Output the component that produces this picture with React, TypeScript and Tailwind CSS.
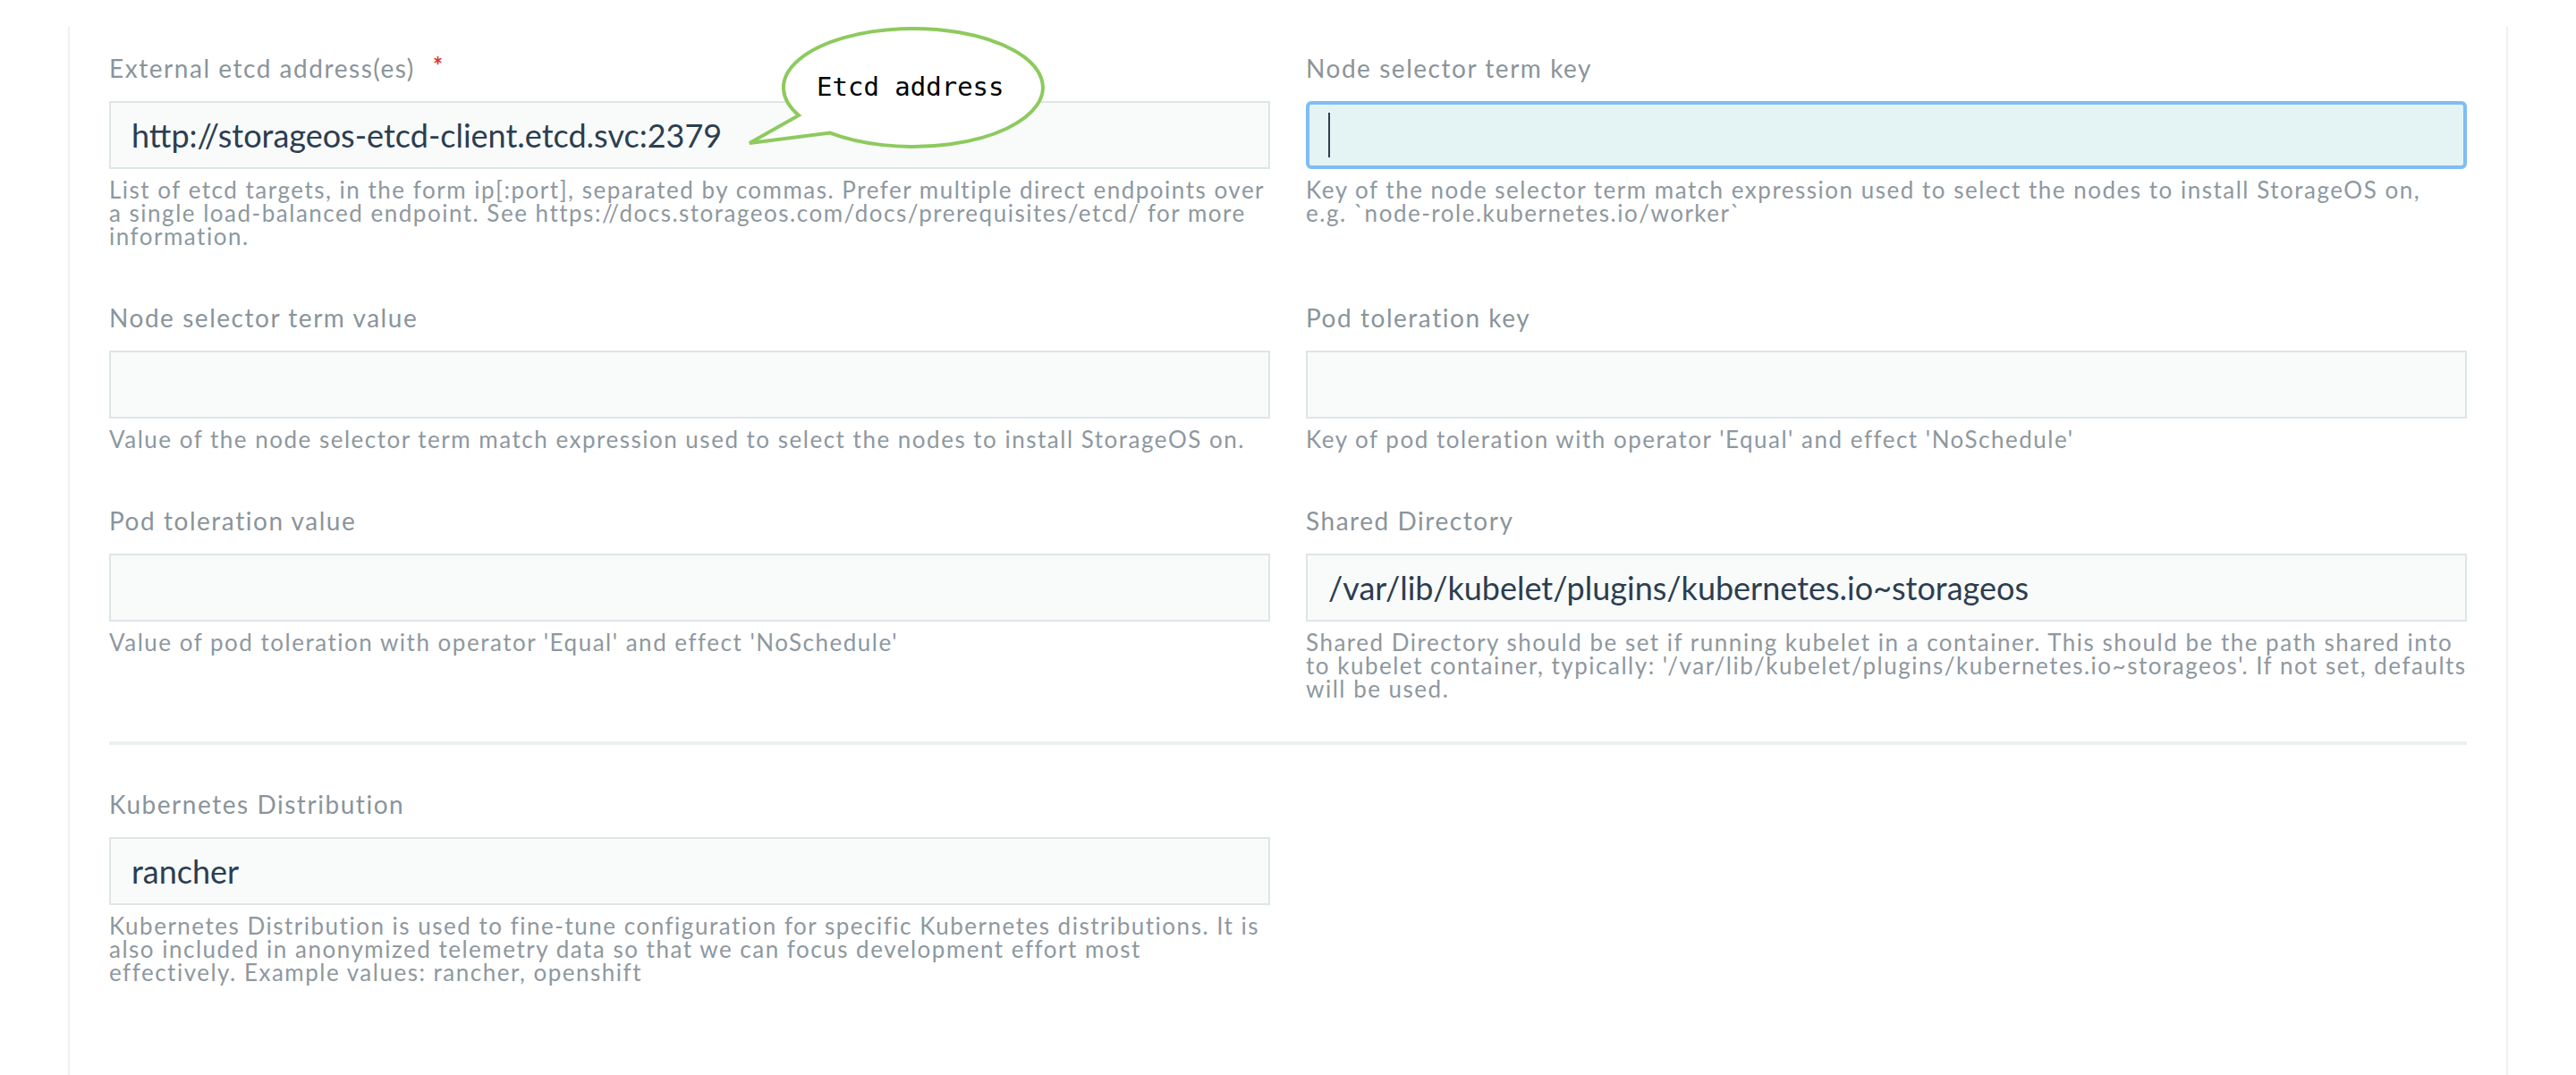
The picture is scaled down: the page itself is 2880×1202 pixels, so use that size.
import React from 'react'

const labelCls = "block text-[28px] leading-[28px] text-[#8a949b] tracking-[0.055em]"
const helpCls = "mt-[10px] text-[26px] leading-[26px] text-[#8e989f] tracking-[0.058em]"
const inputCls =
  "h-[76px] w-full border-2 border-[#dfe5e8] bg-[#f9fbfb] pl-[23px] text-[36px] text-[#2c3e50] outline-none"

function Field({
  label,
  required,
  value,
  focused,
  help,
}: {
  label: string
  required?: boolean
  value?: string
  focused?: boolean
  help: string[]
}) {
  return (
    <div>
      <label className={labelCls}>
        {label}
        {required && (
          <span className="ml-[20px] inline-block align-top text-[26px] font-bold leading-[22px] text-[#e0342f]">*</span>
        )}
      </label>
      <div className="mt-[23px]">
        {focused ? (
          <div className="flex h-[76px] w-full items-center rounded-[6px] border-[4px] border-[#80bcf6] bg-[#e4f4f4] pl-[21px]">
            <span className="h-[50px] w-[2px] bg-[#2c3e50]" />
          </div>
        ) : (
          <input className={inputCls} defaultValue={value} readOnly />
        )}
      </div>
      <p className={helpCls}>
        {help.map((line, i) => (
          <React.Fragment key={i}>
            {line}
            {i < help.length - 1 && <br />}
          </React.Fragment>
        ))}
      </p>
    </div>
  )
}

export default function App() {
  return (
    <div className="relative min-h-[1202px] bg-white pt-[30px] px-[76px]" style={{ fontFamily: 'Lato, "Open Sans", sans-serif' }}>
      <div className="min-h-[1172px] border-x-2 border-[#edf0f1] px-[44px] pt-[32px]">
        <div className="grid grid-cols-2 gap-x-[40px] gap-y-[64px]">
          <Field
            label="External etcd address(es)"
            required
            value="http://storageos-etcd-client.etcd.svc:2379"
            help={[
              'List of etcd targets, in the form ip[:port], separated by commas. Prefer multiple direct endpoints over',
              'a single load-balanced endpoint. See https://docs.storageos.com/docs/prerequisites/etcd/ for more',
              'information.',
            ]}
          />
          <Field
            label="Node selector term key"
            focused
            help={[
              'Key of the node selector term match expression used to select the nodes to install StorageOS on,',
              'e.g. `node-role.kubernetes.io/worker`',
            ]}
          />
          <Field
            label="Node selector term value"
            help={['Value of the node selector term match expression used to select the nodes to install StorageOS on.']}
          />
          <Field
            label="Pod toleration key"
            help={["Key of pod toleration with operator 'Equal' and effect 'NoSchedule'"]}
          />
          <Field
            label="Pod toleration value"
            help={["Value of pod toleration with operator 'Equal' and effect 'NoSchedule'"]}
          />
          <Field
            label="Shared Directory"
            value="/var/lib/kubelet/plugins/kubernetes.io~storageos"
            help={[
              'Shared Directory should be set if running kubelet in a container. This should be the path shared into',
              "to kubelet container, typically: '/var/lib/kubelet/plugins/kubernetes.io~storageos'. If not set, defaults",
              'will be used.',
            ]}
          />
        </div>

        <div className="mt-[46px] h-[4px] bg-[#edf0f1]" />

        <div className="mt-[52px] grid grid-cols-2 gap-x-[40px]">
          <Field
            label="Kubernetes Distribution"
            value="rancher"
            help={[
              'Kubernetes Distribution is used to fine-tune configuration for specific Kubernetes distributions. It is',
              'also included in anonymized telemetry data so that we can focus development effort most',
              'effectively. Example values: rancher, openshift',
            ]}
          />
        </div>
      </div>

      {/* speech bubble annotation */}
      <div className="absolute left-[834px] top-[28px] h-[140px] w-[336px]">
        <svg width="336" height="140" viewBox="0 0 336 140" className="absolute left-0 top-0">
          <path
            d="M 59 101 A 145 66 0 1 1 94 120.6 L 4 132 Z"
            fill="white"
            stroke="#8dca5e"
            strokeWidth="4"
            strokeLinejoin="miter"
          />
        </svg>
        <span
          className="absolute left-[79px] top-[55px] text-[29px] leading-none text-black"
          style={{ fontFamily: '"DejaVu Sans Mono", monospace' }}
        >
          Etcd address
        </span>
      </div>
    </div>
  )
}
